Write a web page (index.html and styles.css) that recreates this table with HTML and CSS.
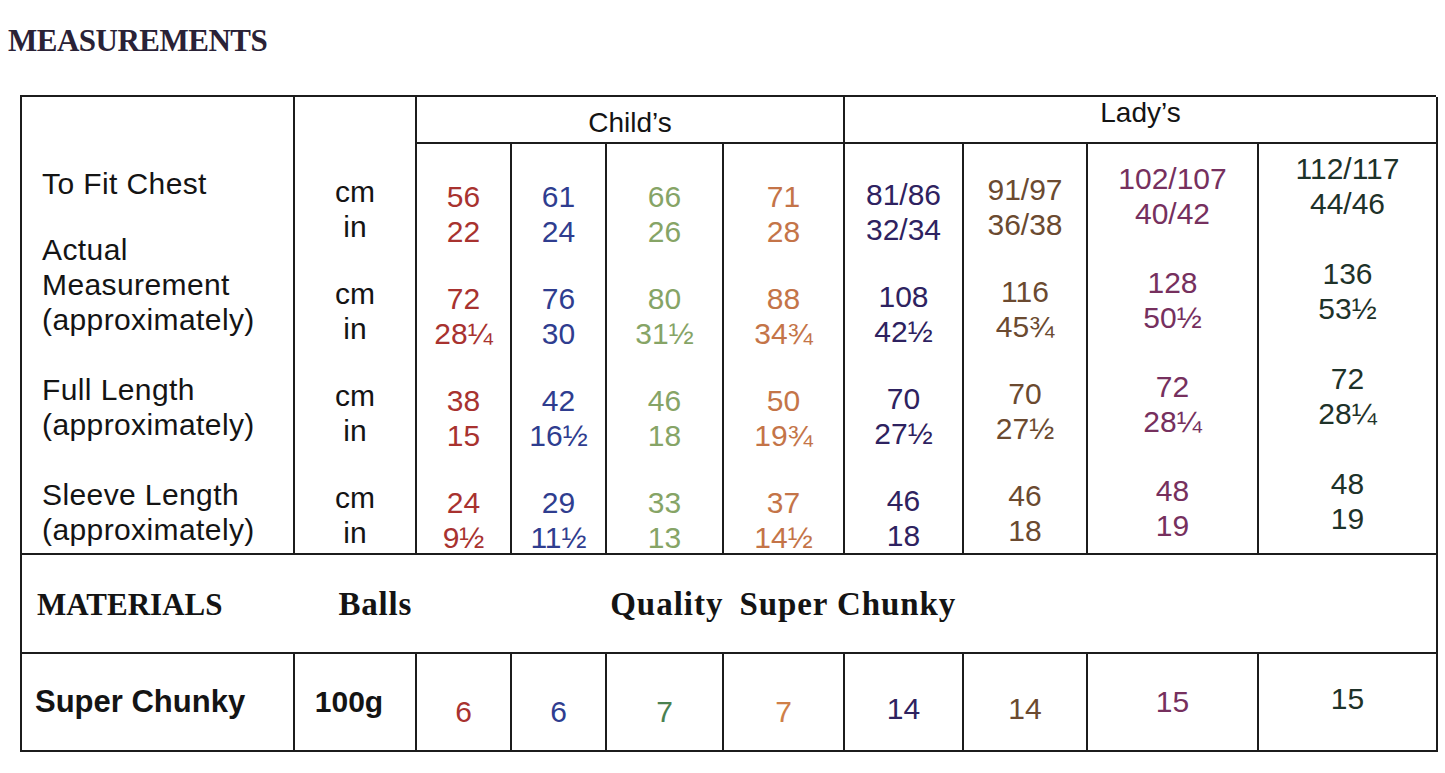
FILE: index.html
```html
<!DOCTYPE html>
<html lang="en">
<head>
<meta charset="utf-8">
<title>Measurements</title>
<link rel="stylesheet" href="styles.css">
</head>
<body>
<h1 class="title">MEASUREMENTS</h1>
<div class="sheet">
  <div class="cell labels">
    <div class="lbl">To Fit Chest</div>
    <div class="lbl">Actual<br>Measurement<br>(approximately)</div>
    <div class="lbl">Full Length<br>(approximately)</div>
    <div class="lbl">Sleeve Length<br>(approximately)</div>
  </div>
  <div class="cell units">
    <div class="pair">cm<br>in</div>
    <div class="pair">cm<br>in</div>
    <div class="pair">cm<br>in</div>
    <div class="pair">cm<br>in</div>
  </div>
  <div class="cell group child">Child’s</div>
  <div class="cell group lady">Lady’s</div>

  <div class="cell vals c1"><div class="pair">56<br>22</div><div class="pair">72<br>28¼</div><div class="pair">38<br>15</div><div class="pair">24<br>9½</div></div>
  <div class="cell vals c2"><div class="pair">61<br>24</div><div class="pair">76<br>30</div><div class="pair">42<br>16½</div><div class="pair">29<br>11½</div></div>
  <div class="cell vals c3"><div class="pair">66<br>26</div><div class="pair">80<br>31½</div><div class="pair">46<br>18</div><div class="pair">33<br>13</div></div>
  <div class="cell vals c4"><div class="pair">71<br>28</div><div class="pair">88<br>34¾</div><div class="pair">50<br>19¾</div><div class="pair">37<br>14½</div></div>
  <div class="cell vals c5"><div class="pair">81/86<br>32/34</div><div class="pair">108<br>42½</div><div class="pair">70<br>27½</div><div class="pair">46<br>18</div></div>
  <div class="cell vals c6"><div class="pair">91/97<br>36/38</div><div class="pair">116<br>45¾</div><div class="pair">70<br>27½</div><div class="pair">46<br>18</div></div>
  <div class="cell vals c7"><div class="pair">102/107<br>40/42</div><div class="pair">128<br>50½</div><div class="pair">72<br>28¼</div><div class="pair">48<br>19</div></div>
  <div class="cell vals c8"><div class="pair">112/117<br>44/46</div><div class="pair">136<br>53½</div><div class="pair">72<br>28¼</div><div class="pair">48<br>19</div></div>

  <div class="cell materials">
    <span class="m-title">MATERIALS</span>
    <span class="m-balls">Balls</span>
    <span class="m-quality">Quality</span>
    <span class="m-yarn">Super Chunky</span>
  </div>

  <div class="cell foot foot-name">Super Chunky</div>
  <div class="cell foot foot-weight">100g</div>
  <div class="cell foot c1 f-low">6</div>
  <div class="cell foot c2 f-low">6</div>
  <div class="cell foot g3 f-low">7</div>
  <div class="cell foot o4 f-low">7</div>
  <div class="cell foot c5 f-mid">14</div>
  <div class="cell foot c6 f-mid">14</div>
  <div class="cell foot c7">15</div>
  <div class="cell foot c8 f-high">15</div>
</div>
</body>
</html>
```
FILE: styles.css
```css
* { box-sizing: border-box; }

html, body {
  margin: 0;
  padding: 0;
  background: #ffffff;
}

body {
  font-family: "Liberation Sans", Arial, sans-serif;
  color: #141414;
}

.title {
  margin: 0 0 36px 8px;
  padding-top: 22px;
  font-family: "Liberation Serif", "Times New Roman", serif;
  font-weight: 700;
  font-size: 31px;
  line-height: 37px;
  color: #2a2236;
  letter-spacing: -0.5px;
}

.sheet {
  margin-left: 20px;
  width: 1416px;
  display: grid;
  grid-template-columns: 273px 122px 95px 95px 117px 121px 119px 124px 171px 179px;
  grid-template-rows: 47px 411px 99px 98px;
  border-top: 2px solid #1c1c1c;
  border-left: 2px solid #1c1c1c;
}

.cell {
  border-right: 2px solid #1c1c1c;
  border-bottom: 2px solid #1c1c1c;
}

.labels {
  grid-column: 1;
  grid-row: 1 / 3;
  padding: 69px 0 0 20px;
  display: flex;
  flex-direction: column;
  gap: 31px;
  font-size: 30px;
  line-height: 35px;
  letter-spacing: 0.4px;
}
.labels .lbl:nth-child(3),
.labels .lbl:nth-child(4) { margin-top: 4px; }

.units {
  grid-column: 2;
  grid-row: 1 / 3;
  padding-top: 77px;
  display: flex;
  flex-direction: column;
  align-items: center;
  text-align: center;
  gap: 32px;
  font-size: 30px;
  line-height: 35px;
}

.group {
  grid-row: 1;
  display: flex;
  align-items: center;
  justify-content: center;
  font-size: 28px;
  padding-top: 6px;
}
.child { grid-column: 3 / 7; }
.lady { grid-column: 7 / 11; padding-top: 0; padding-bottom: 14px; }

.vals {
  grid-row: 2;
  display: flex;
  flex-direction: column;
  align-items: center;
  text-align: center;
  padding-top: 35px;
  gap: 32px;
  font-size: 30px;
  line-height: 35px;
}
.vals.c5 { padding-top: 33px; gap: 32px; }
.vals.c6 { padding-top: 28px; gap: 32px; }
.vals.c7 { padding-top: 17px; gap: 34px; }
.vals.c8 { padding-top: 7px; gap: 35px; }

.c1 { color: #a8322f; }
.c2 { color: #2f3d8f; }
.c3 { color: #86a466; }
.c4 { color: #c47448; }
.c5 { color: #2e2260; }
.c6 { color: #6b4a30; }
.c7 { color: #76305e; }
.c8 { color: #1e3229; }
.g3 { color: #4a8150; }
.o4 { color: #cf7f48; }

.materials {
  grid-column: 1 / 11;
  grid-row: 3;
  display: flex;
  align-items: baseline;
  padding: 31px 0 0 15px;
  font-family: "Liberation Serif", "Times New Roman", serif;
  font-weight: 700;
  font-size: 33px;
  color: #141414;
}
.m-title { font-size: 31px; }
.m-balls { margin-left: 116px; letter-spacing: 0.8px; }
.m-quality { margin-left: 198px; letter-spacing: 1px; }
.m-yarn { margin-left: 16px; letter-spacing: 0.9px; }

.foot {
  grid-row: 4;
  display: flex;
  align-items: center;
  justify-content: center;
  font-size: 30px;
}
.foot-name {
  justify-content: flex-start;
  padding-left: 13px;
  font-weight: 700;
  font-size: 31px;
}
.foot-weight { font-weight: 700; padding-right: 12px; }
.f-low { padding-top: 20px; }
.f-mid { padding-top: 14px; }
.f-high { padding-bottom: 6px; }
```
